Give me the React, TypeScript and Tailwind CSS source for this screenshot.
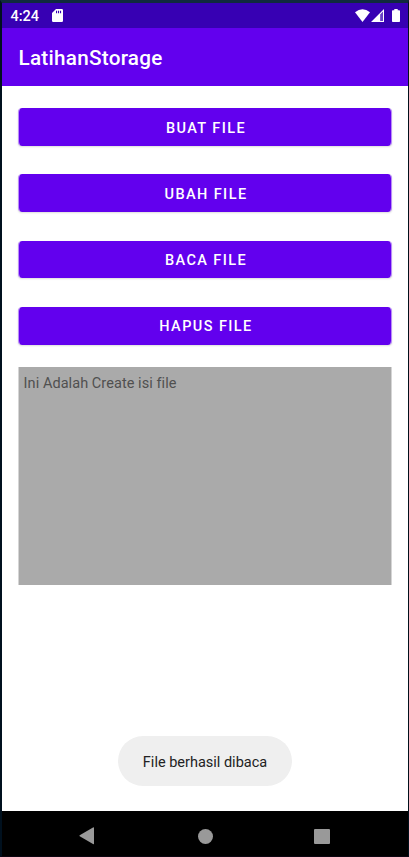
const actions = ["BUAT FILE", "UBAH FILE", "BACA FILE", "HAPUS FILE"];

function StatusBar() {
  return (
    <header className="flex h-[25px] shrink-0 items-center justify-between bg-[#3700b3] pl-[8.5px] pr-2 text-white">
      <div className="flex items-center gap-[13px]">
        <span className="w-[28.5px] pt-[3px] text-[14.5px] leading-none font-medium">4:24</span>
        <svg width="11" height="13" viewBox="0 0 11 13" fill="currentColor">
          <path fillRule="evenodd" d="M4 0h5.8Q11 0 11 1.2v10.6Q11 13 9.8 13H1.2Q0 13 0 11.8V4ZM4 1.7v2.6h1.1V1.7ZM6 1.7v2.6h1.1V1.7ZM8 1.7v2.6h1.1V1.7Z" />
        </svg>
      </div>
      <div className="flex items-center">
        <svg width="15" height="13" viewBox="0 0 15 13" fill="currentColor">
          <path d="M0 3.3Q7.5-2.8 15 3.3L7.5 13Z" />
        </svg>
        <svg className="ml-px" width="13" height="13" viewBox="0 0 13 13" fill="currentColor">
          <path fillRule="evenodd" d="M0 13 13 0V13ZM9.2 5.5V12H12V2.5Z" />
          <path d="M9.2 5.5 12 2.5V12H9.2Z" opacity="0.25" />
        </svg>
        <svg className="ml-2" width="8" height="13" viewBox="0 0 8 13" fill="currentColor">
          <path d="M2.3 0h3.4v1.2h1.5q.8 0 .8.8v10.2q0 .8-.8.8H.8Q0 13 0 12.2V2q0-.8.8-.8h1.5Z" />
        </svg>
      </div>
    </header>
  );
}

function NavigationBar() {
  return (
    <nav className="flex h-[45px] shrink-0 items-center bg-black pt-[5px] pl-[77px] text-[#999]">
      <svg width="16" height="18" viewBox="0 0 16 18" fill="currentColor">
        <path d="M.7 8.3 14 .5q1-.5 1 .5v15.8q0 .8-1 .3L.7 9.2q-.7-.4 0-.9Z" />
      </svg>
      <span className="ml-[103px] h-[15px] w-[15px] rounded-full bg-[#999]" />
      <span className="ml-[101px] h-[15px] w-[15.5px] rounded-[1px] bg-[#999]" />
    </nav>
  );
}

export default function App() {
  return (
    <div className="flex h-[857px] w-[409px] flex-col border-t-[3px] border-r border-b border-l-2 border-t-[#102a3e] border-r-[#00101c] border-b-[#0c0510] border-l-[#00101e] bg-white font-['Roboto',sans-serif]">
      <StatusBar />
      <div className="flex h-[58px] shrink-0 items-center bg-[#6200ee] pt-[2px] pl-[16.5px]">
        <h1 className="text-[20.7px] leading-none font-medium tracking-[0.26px] text-white">LatihanStorage</h1>
      </div>
      <main className="flex flex-1 flex-col px-4 pt-[22.2px]">
        <div className="flex flex-col gap-[28.67px]">
          {actions.map((label) => (
            <button
              key={label}
              className="flex h-[37.6px] w-full items-center justify-center rounded-[4px] border-x border-[#b98cf8] bg-[#6200ee] bg-clip-padding pt-[4px] pl-[2px] text-[14.5px] leading-none font-medium tracking-[1.42px] text-white shadow-[0_1px_2px_rgba(0,0,0,0.14)]"
            >
              {label}
            </button>
          ))}
        </div>
        <div className="mt-[22.4px] h-[218px] border-x border-[#d5d5d5] bg-[#aaa] bg-clip-padding px-[4.6px] pt-[8px] text-[14.5px] leading-[17px] tracking-[0.06px] text-[#505050]">
          Ini Adalah Create isi file
        </div>
        <div className="mt-auto mb-[25px] flex h-[50px] w-[174px] items-center justify-center self-center rounded-[25px] bg-[#efefef] pt-[4px] text-[14.5px] leading-none text-[#222]">
          File berhasil dibaca
        </div>
      </main>
      <NavigationBar />
    </div>
  );
}
